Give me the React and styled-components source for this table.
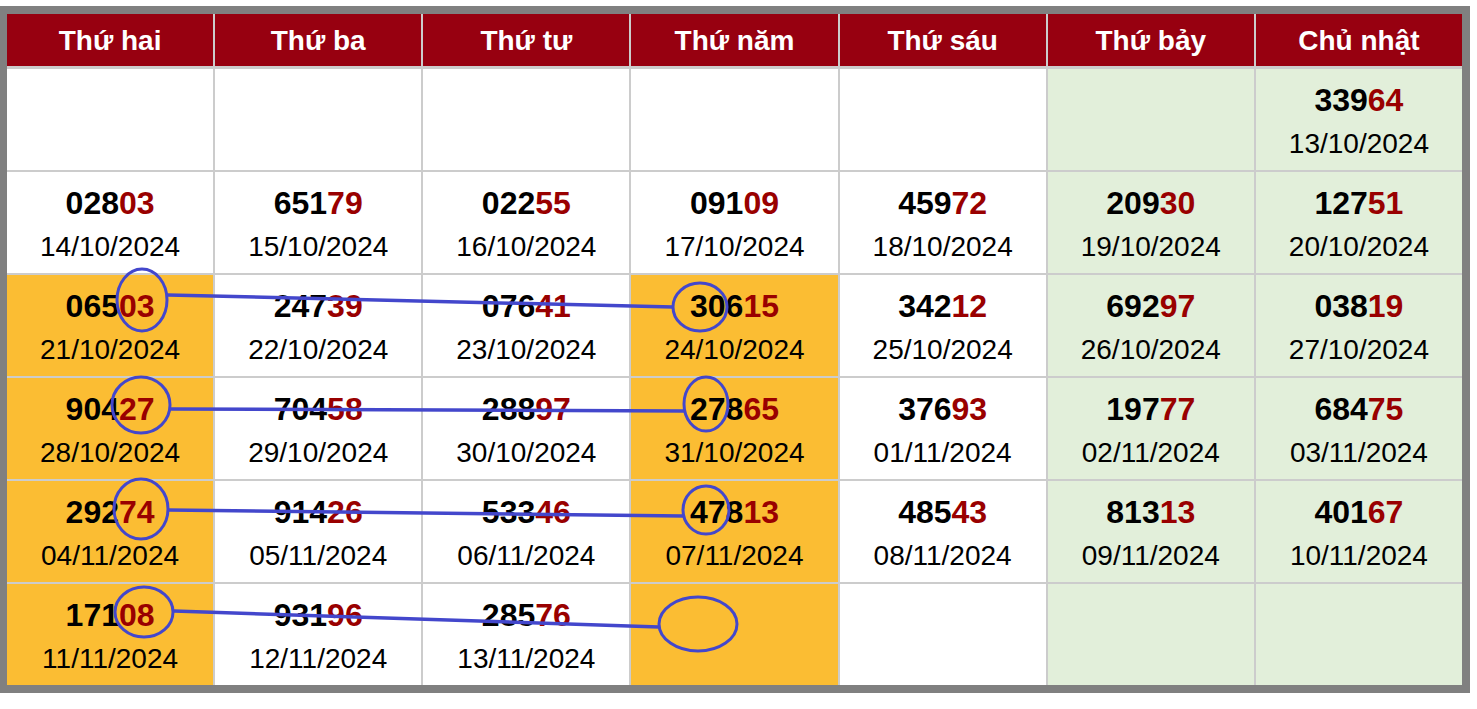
import styled, { createGlobalStyle } from "styled-components";

const GlobalStyle = createGlobalStyle`
  html, body {
    margin: 0;
    padding: 0;
    background: #ffffff;
  }
  body {
    font-family: "Liberation Sans", Arial, sans-serif;
  }
`;

const Page = styled.div`
  position: relative;
  width: 1477px;
  height: 709px;
  padding-top: 6px;
  box-sizing: border-box;
`;

const Frame = styled.div`
  width: 1470px;
  box-sizing: border-box;
  border: 8px solid #808080;
  border-left-width: 7px;
  background: #cccccc;
  display: flex;
  flex-direction: column;
  gap: 2px;
`;

const HeaderRow = styled.div`
  display: grid;
  grid-template-columns: repeat(7, 1fr);
  column-gap: 2px;
  height: 52px;
  margin-bottom: 1px;
`;

const HeaderCell = styled.div`
  background: #970010;
  color: #ffffff;
  font-weight: bold;
  font-size: 28px;
  display: flex;
  align-items: center;
  justify-content: center;
  padding-top: 1px;
`;

const Row = styled.div`
  display: grid;
  grid-template-columns: repeat(7, 1fr);
  column-gap: 2px;
  height: 101px;
`;

const tones = {
  white: "#ffffff",
  orange: "#fbbd33",
  green: "#e2efda",
};

const Cell = styled.div`
  background: ${(p) => tones[p.$tone]};
  display: flex;
  flex-direction: column;
  align-items: center;
  justify-content: center;
  padding-top: 5px;
  color: #000000;
`;

const Number = styled.div`
  font-weight: bold;
  font-size: 32px;
  line-height: 40px;
`;

const Tail = styled.span`
  color: #990000;
`;

const DateText = styled.div`
  font-size: 28px;
  line-height: 40px;
  margin-top: 4px;
`;

const Overlay = styled.svg`
  position: absolute;
  left: 0;
  top: 0;
  pointer-events: none;
`;

const days = ["Thứ hai", "Thứ ba", "Thứ tư", "Thứ năm", "Thứ sáu", "Thứ bảy", "Chủ nhật"];

const rows = [
  [null, null, null, null, null, null, ["33964", "13/10/2024"]],
  [
    ["02803", "14/10/2024"],
    ["65179", "15/10/2024"],
    ["02255", "16/10/2024"],
    ["09109", "17/10/2024"],
    ["45972", "18/10/2024"],
    ["20930", "19/10/2024"],
    ["12751", "20/10/2024"],
  ],
  [
    ["06503", "21/10/2024"],
    ["24739", "22/10/2024"],
    ["07641", "23/10/2024"],
    ["30615", "24/10/2024"],
    ["34212", "25/10/2024"],
    ["69297", "26/10/2024"],
    ["03819", "27/10/2024"],
  ],
  [
    ["90427", "28/10/2024"],
    ["70458", "29/10/2024"],
    ["28897", "30/10/2024"],
    ["27865", "31/10/2024"],
    ["37693", "01/11/2024"],
    ["19777", "02/11/2024"],
    ["68475", "03/11/2024"],
  ],
  [
    ["29274", "04/11/2024"],
    ["91426", "05/11/2024"],
    ["53346", "06/11/2024"],
    ["47813", "07/11/2024"],
    ["48543", "08/11/2024"],
    ["81313", "09/11/2024"],
    ["40167", "10/11/2024"],
  ],
  [
    ["17108", "11/11/2024"],
    ["93196", "12/11/2024"],
    ["28576", "13/11/2024"],
    null,
    null,
    null,
    null,
  ],
];

// which background a cell gets
function toneFor(r, c) {
  if (c >= 5) return "green";
  if (r >= 2 && (c === 0 || c === 3)) return "orange";
  return "white";
}

// hand-drawn blue marks on top of the table
const rings = [
  { cx: 142, cy: 300, rx: 25, ry: 31 },
  { cx: 700, cy: 307, rx: 27, ry: 24 },
  { cx: 141, cy: 405, rx: 29, ry: 28 },
  { cx: 706, cy: 404, rx: 22, ry: 27 },
  { cx: 141, cy: 509, rx: 27, ry: 30 },
  { cx: 706, cy: 510, rx: 23, ry: 24 },
  { cx: 144, cy: 612, rx: 29, ry: 25 },
  { cx: 698, cy: 624, rx: 39, ry: 27 },
];

const links = [
  [168, 295, 673, 307],
  [171, 409, 684, 411],
  [168, 510, 683, 516],
  [174, 611, 659, 627],
];

export default function App() {
  return (
    <Page>
      <GlobalStyle />
      <Frame>
        <HeaderRow>
          {days.map((d) => (
            <HeaderCell key={d}>{d}</HeaderCell>
          ))}
        </HeaderRow>
        {rows.map((row, r) => (
          <Row key={r}>
            {row.map((item, c) => (
              <Cell key={c} $tone={toneFor(r, c)}>
                {item && (
                  <>
                    <Number>
                      {item[0].slice(0, 3)}
                      <Tail>{item[0].slice(3)}</Tail>
                    </Number>
                    <DateText>{item[1]}</DateText>
                  </>
                )}
              </Cell>
            ))}
          </Row>
        ))}
      </Frame>
      <Overlay width="1477" height="709" viewBox="0 0 1477 709">
        {links.map(([x1, y1, x2, y2], i) => (
          <line key={i} x1={x1} y1={y1} x2={x2} y2={y2} stroke="#4347cc" strokeWidth="3.5" />
        ))}
        {rings.map((e, i) => (
          <ellipse key={i} {...e} fill="none" stroke="#4347cc" strokeWidth="3" />
        ))}
      </Overlay>
    </Page>
  );
}
